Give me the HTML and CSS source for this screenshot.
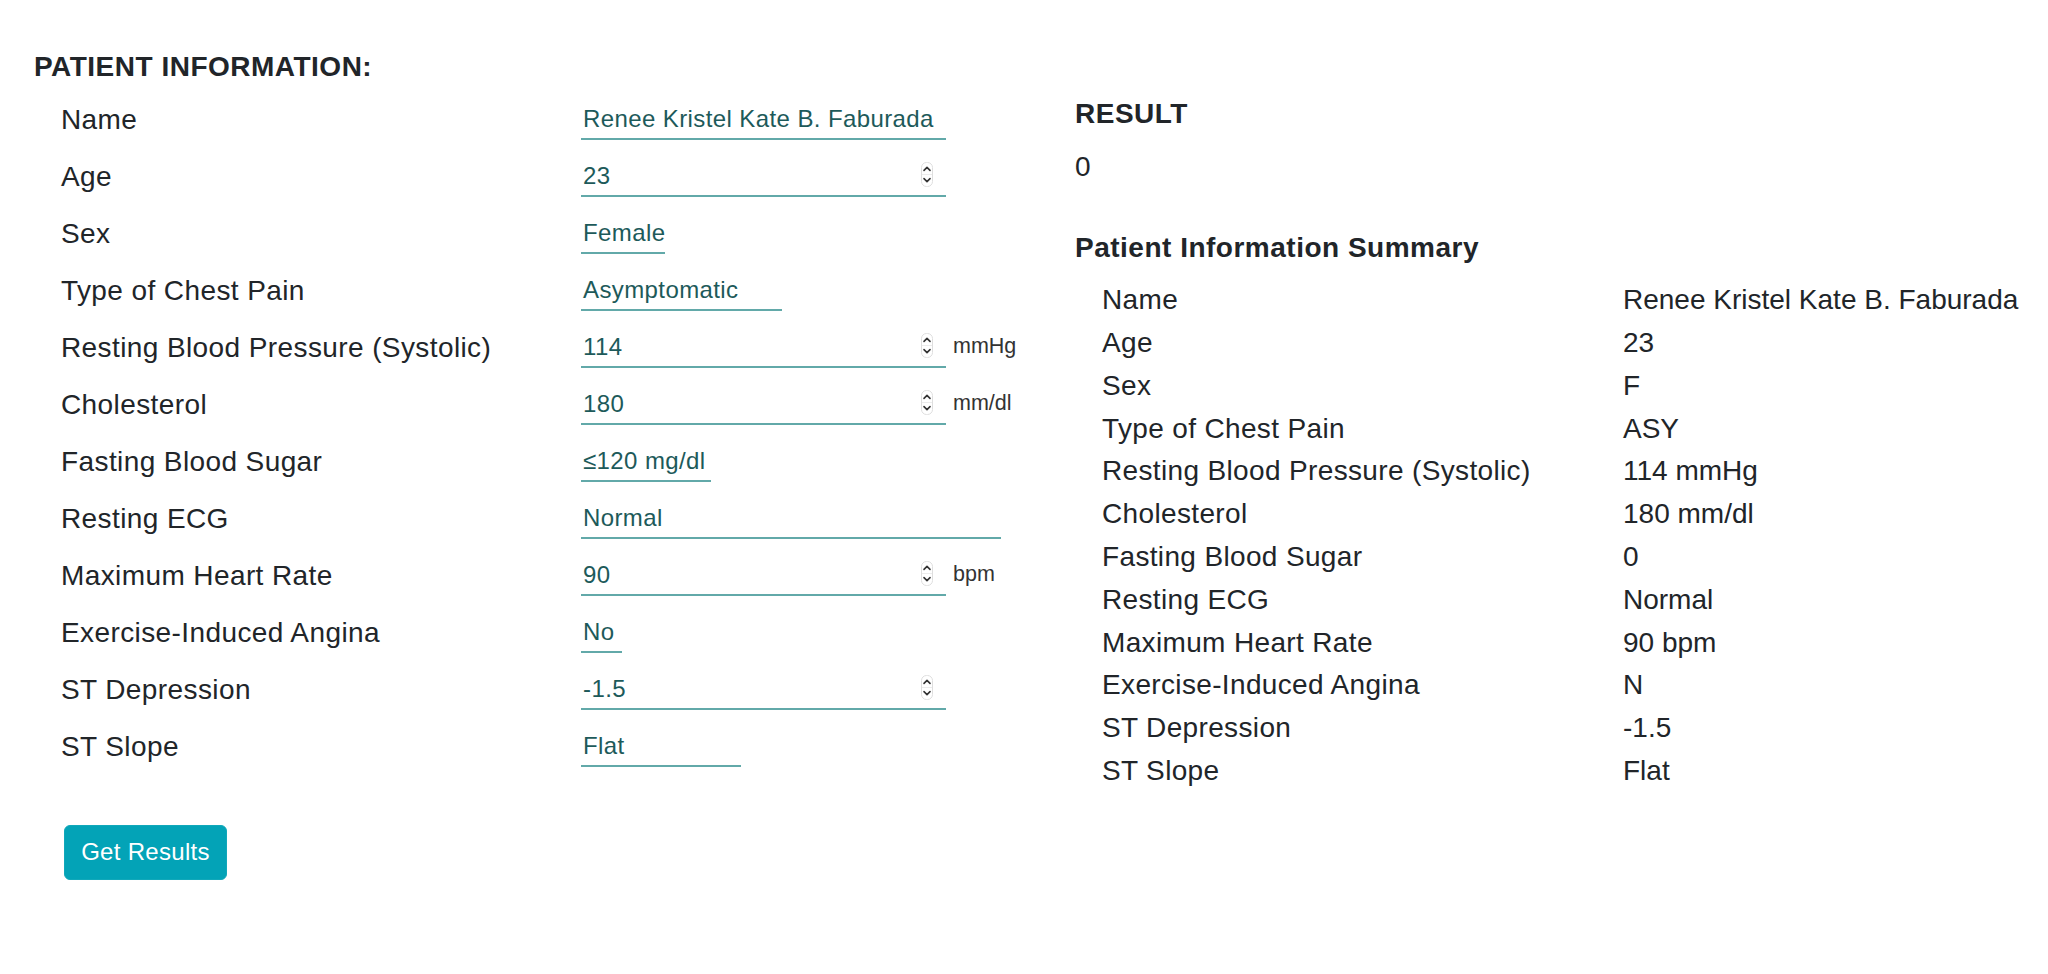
FILE: index.html
```html
<!DOCTYPE html>
<html lang="en">
<head>
<meta charset="utf-8">
<title>Heart Disease Prediction</title>
<link rel="stylesheet" href="styles.css">
</head>
<body>
<div class="page">
  <section class="form-col">
    <h2 class="section-title">PATIENT INFORMATION:</h2>
    <div class="rows">
      <div class="row"><span class="label">Name</span><span class="field wide">Renee Kristel Kate B. Faburada</span></div>
      <div class="row"><span class="label">Age</span><span class="field wide num"><span>23</span><svg class="spin" viewBox="0 0 12 25" width="12" height="25"><rect x="0.5" y="0.5" width="11" height="24" rx="5" fill="#fff" stroke="#dedede"/><line x1="1" y1="12.5" x2="11" y2="12.5" stroke="#ececec"/><path d="M3 8.4 L6 5.4 L9 8.4" fill="none" stroke="#333" stroke-width="1.6" stroke-linecap="round" stroke-linejoin="round"/><path d="M3 16.6 L6 19.6 L9 16.6" fill="none" stroke="#333" stroke-width="1.6" stroke-linecap="round" stroke-linejoin="round"/></svg></span></div>
      <div class="row"><span class="label">Sex</span><span class="field w-sex">Female</span></div>
      <div class="row"><span class="label">Type of Chest Pain</span><span class="field w-cp">Asymptomatic</span></div>
      <div class="row"><span class="label">Resting Blood Pressure (Systolic)</span><span class="field wide num"><span>114</span><svg class="spin" viewBox="0 0 12 25" width="12" height="25"><rect x="0.5" y="0.5" width="11" height="24" rx="5" fill="#fff" stroke="#dedede"/><line x1="1" y1="12.5" x2="11" y2="12.5" stroke="#ececec"/><path d="M3 8.4 L6 5.4 L9 8.4" fill="none" stroke="#333" stroke-width="1.6" stroke-linecap="round" stroke-linejoin="round"/><path d="M3 16.6 L6 19.6 L9 16.6" fill="none" stroke="#333" stroke-width="1.6" stroke-linecap="round" stroke-linejoin="round"/></svg></span><span class="unit">mmHg</span></div>
      <div class="row"><span class="label">Cholesterol</span><span class="field wide num"><span>180</span><svg class="spin" viewBox="0 0 12 25" width="12" height="25"><rect x="0.5" y="0.5" width="11" height="24" rx="5" fill="#fff" stroke="#dedede"/><line x1="1" y1="12.5" x2="11" y2="12.5" stroke="#ececec"/><path d="M3 8.4 L6 5.4 L9 8.4" fill="none" stroke="#333" stroke-width="1.6" stroke-linecap="round" stroke-linejoin="round"/><path d="M3 16.6 L6 19.6 L9 16.6" fill="none" stroke="#333" stroke-width="1.6" stroke-linecap="round" stroke-linejoin="round"/></svg></span><span class="unit">mm/dl</span></div>
      <div class="row"><span class="label">Fasting Blood Sugar</span><span class="field w-fbs">≤120 mg/dl</span></div>
      <div class="row"><span class="label">Resting ECG</span><span class="field w-ecg">Normal</span></div>
      <div class="row"><span class="label">Maximum Heart Rate</span><span class="field wide num"><span>90</span><svg class="spin" viewBox="0 0 12 25" width="12" height="25"><rect x="0.5" y="0.5" width="11" height="24" rx="5" fill="#fff" stroke="#dedede"/><line x1="1" y1="12.5" x2="11" y2="12.5" stroke="#ececec"/><path d="M3 8.4 L6 5.4 L9 8.4" fill="none" stroke="#333" stroke-width="1.6" stroke-linecap="round" stroke-linejoin="round"/><path d="M3 16.6 L6 19.6 L9 16.6" fill="none" stroke="#333" stroke-width="1.6" stroke-linecap="round" stroke-linejoin="round"/></svg></span><span class="unit">bpm</span></div>
      <div class="row"><span class="label">Exercise-Induced Angina</span><span class="field w-no">No</span></div>
      <div class="row"><span class="label">ST Depression</span><span class="field wide num"><span>-1.5</span><svg class="spin" viewBox="0 0 12 25" width="12" height="25"><rect x="0.5" y="0.5" width="11" height="24" rx="5" fill="#fff" stroke="#dedede"/><line x1="1" y1="12.5" x2="11" y2="12.5" stroke="#ececec"/><path d="M3 8.4 L6 5.4 L9 8.4" fill="none" stroke="#333" stroke-width="1.6" stroke-linecap="round" stroke-linejoin="round"/><path d="M3 16.6 L6 19.6 L9 16.6" fill="none" stroke="#333" stroke-width="1.6" stroke-linecap="round" stroke-linejoin="round"/></svg></span></div>
      <div class="row"><span class="label">ST Slope</span><span class="field w-slope">Flat</span></div>
    </div>
    <button class="btn" type="button">Get Results</button>
  </section>
  <section class="result-col">
    <h2 class="section-title">RESULT</h2>
    <p class="result-value">0</p>
    <h2 class="section-title">Patient Information Summary</h2>
    <div class="summary">
      <span class="s-label">Name</span><span>Renee Kristel Kate B. Faburada</span>
      <span class="s-label">Age</span><span>23</span>
      <span class="s-label">Sex</span><span>F</span>
      <span class="s-label">Type of Chest Pain</span><span>ASY</span>
      <span class="s-label">Resting Blood Pressure (Systolic)</span><span>114 mmHg</span>
      <span class="s-label">Cholesterol</span><span>180 mm/dl</span>
      <span class="s-label">Fasting Blood Sugar</span><span>0</span>
      <span class="s-label">Resting ECG</span><span>Normal</span>
      <span class="s-label">Maximum Heart Rate</span><span>90 bpm</span>
      <span class="s-label">Exercise-Induced Angina</span><span>N</span>
      <span class="s-label">ST Depression</span><span>-1.5</span>
      <span class="s-label">ST Slope</span><span>Flat</span>
    </div>
  </section>
</div>
</body>
</html>
```
FILE: styles.css
```css
* { box-sizing: border-box; }
html, body {
  margin: 0;
  padding: 0;
  background: #ffffff;
}
body {
  font-family: "Liberation Sans", Arial, sans-serif;
  font-size: 28px;
  color: #212529;
}
.page {
  display: flex;
  padding: 50px 0 0 34px;
}
.form-col {
  width: 1041px;
  flex: none;
}
.section-title {
  margin: 0;
  font-size: 28px;
  font-weight: bold;
  line-height: 1.2;
  letter-spacing: 0.5px;
  color: #212529;
}
.form-col .section-title {
  margin-bottom: 7px;
}
.rows {
  display: flex;
  flex-direction: column;
}
.row {
  display: flex;
  align-items: flex-start;
  height: 57px;
  padding-left: 27px;
}
.label {
  width: 520px;
  flex: none;
  line-height: 57px;
  letter-spacing: 0.4px;
}
.field {
  display: inline-block;
  margin-top: 14px;
  font-size: 24px;
  line-height: 28px;
  letter-spacing: 0.4px;
  color: #1d5a5a;
  padding: 0 0 5px 2px;
  border-bottom: 2px solid #62a9a9;
}
.field.num {
  display: inline-flex;
  align-items: center;
  justify-content: space-between;
  padding-right: 13px;
}
.spin {
  display: block;
  margin-top: -3px;
}
.wide { width: 365px; }
.w-sex { width: 84px; }
.w-cp { width: 201px; }
.w-fbs { width: 130px; }
.w-ecg { width: 420px; }
.w-no { width: 41px; }
.w-slope { width: 160px; }
.unit {
  margin: 13px 0 0 7px;
  font-size: 21.5px;
  line-height: 28px;
  color: #333333;
}
.btn {
  display: block;
  margin: 50px 0 0 30px;
  width: 163px;
  height: 55px;
  border: 1px solid #11a8ba;
  border-radius: 6px;
  background: #03a3b7;
  color: #ffffff;
  font-family: "Liberation Sans", Arial, sans-serif;
  font-size: 24px;
  letter-spacing: 0.3px;
  padding: 0;
}
.result-col {
  flex: 1;
  padding-top: 47px;
}
.result-value {
  margin: 15px 0 43px;
  line-height: 42px;
}
.summary {
  display: grid;
  grid-template-columns: 521px auto;
  line-height: 42.8px;
  margin-top: 15px;
  padding-left: 27px;
}
.s-label {
  letter-spacing: 0.35px;
}
```
